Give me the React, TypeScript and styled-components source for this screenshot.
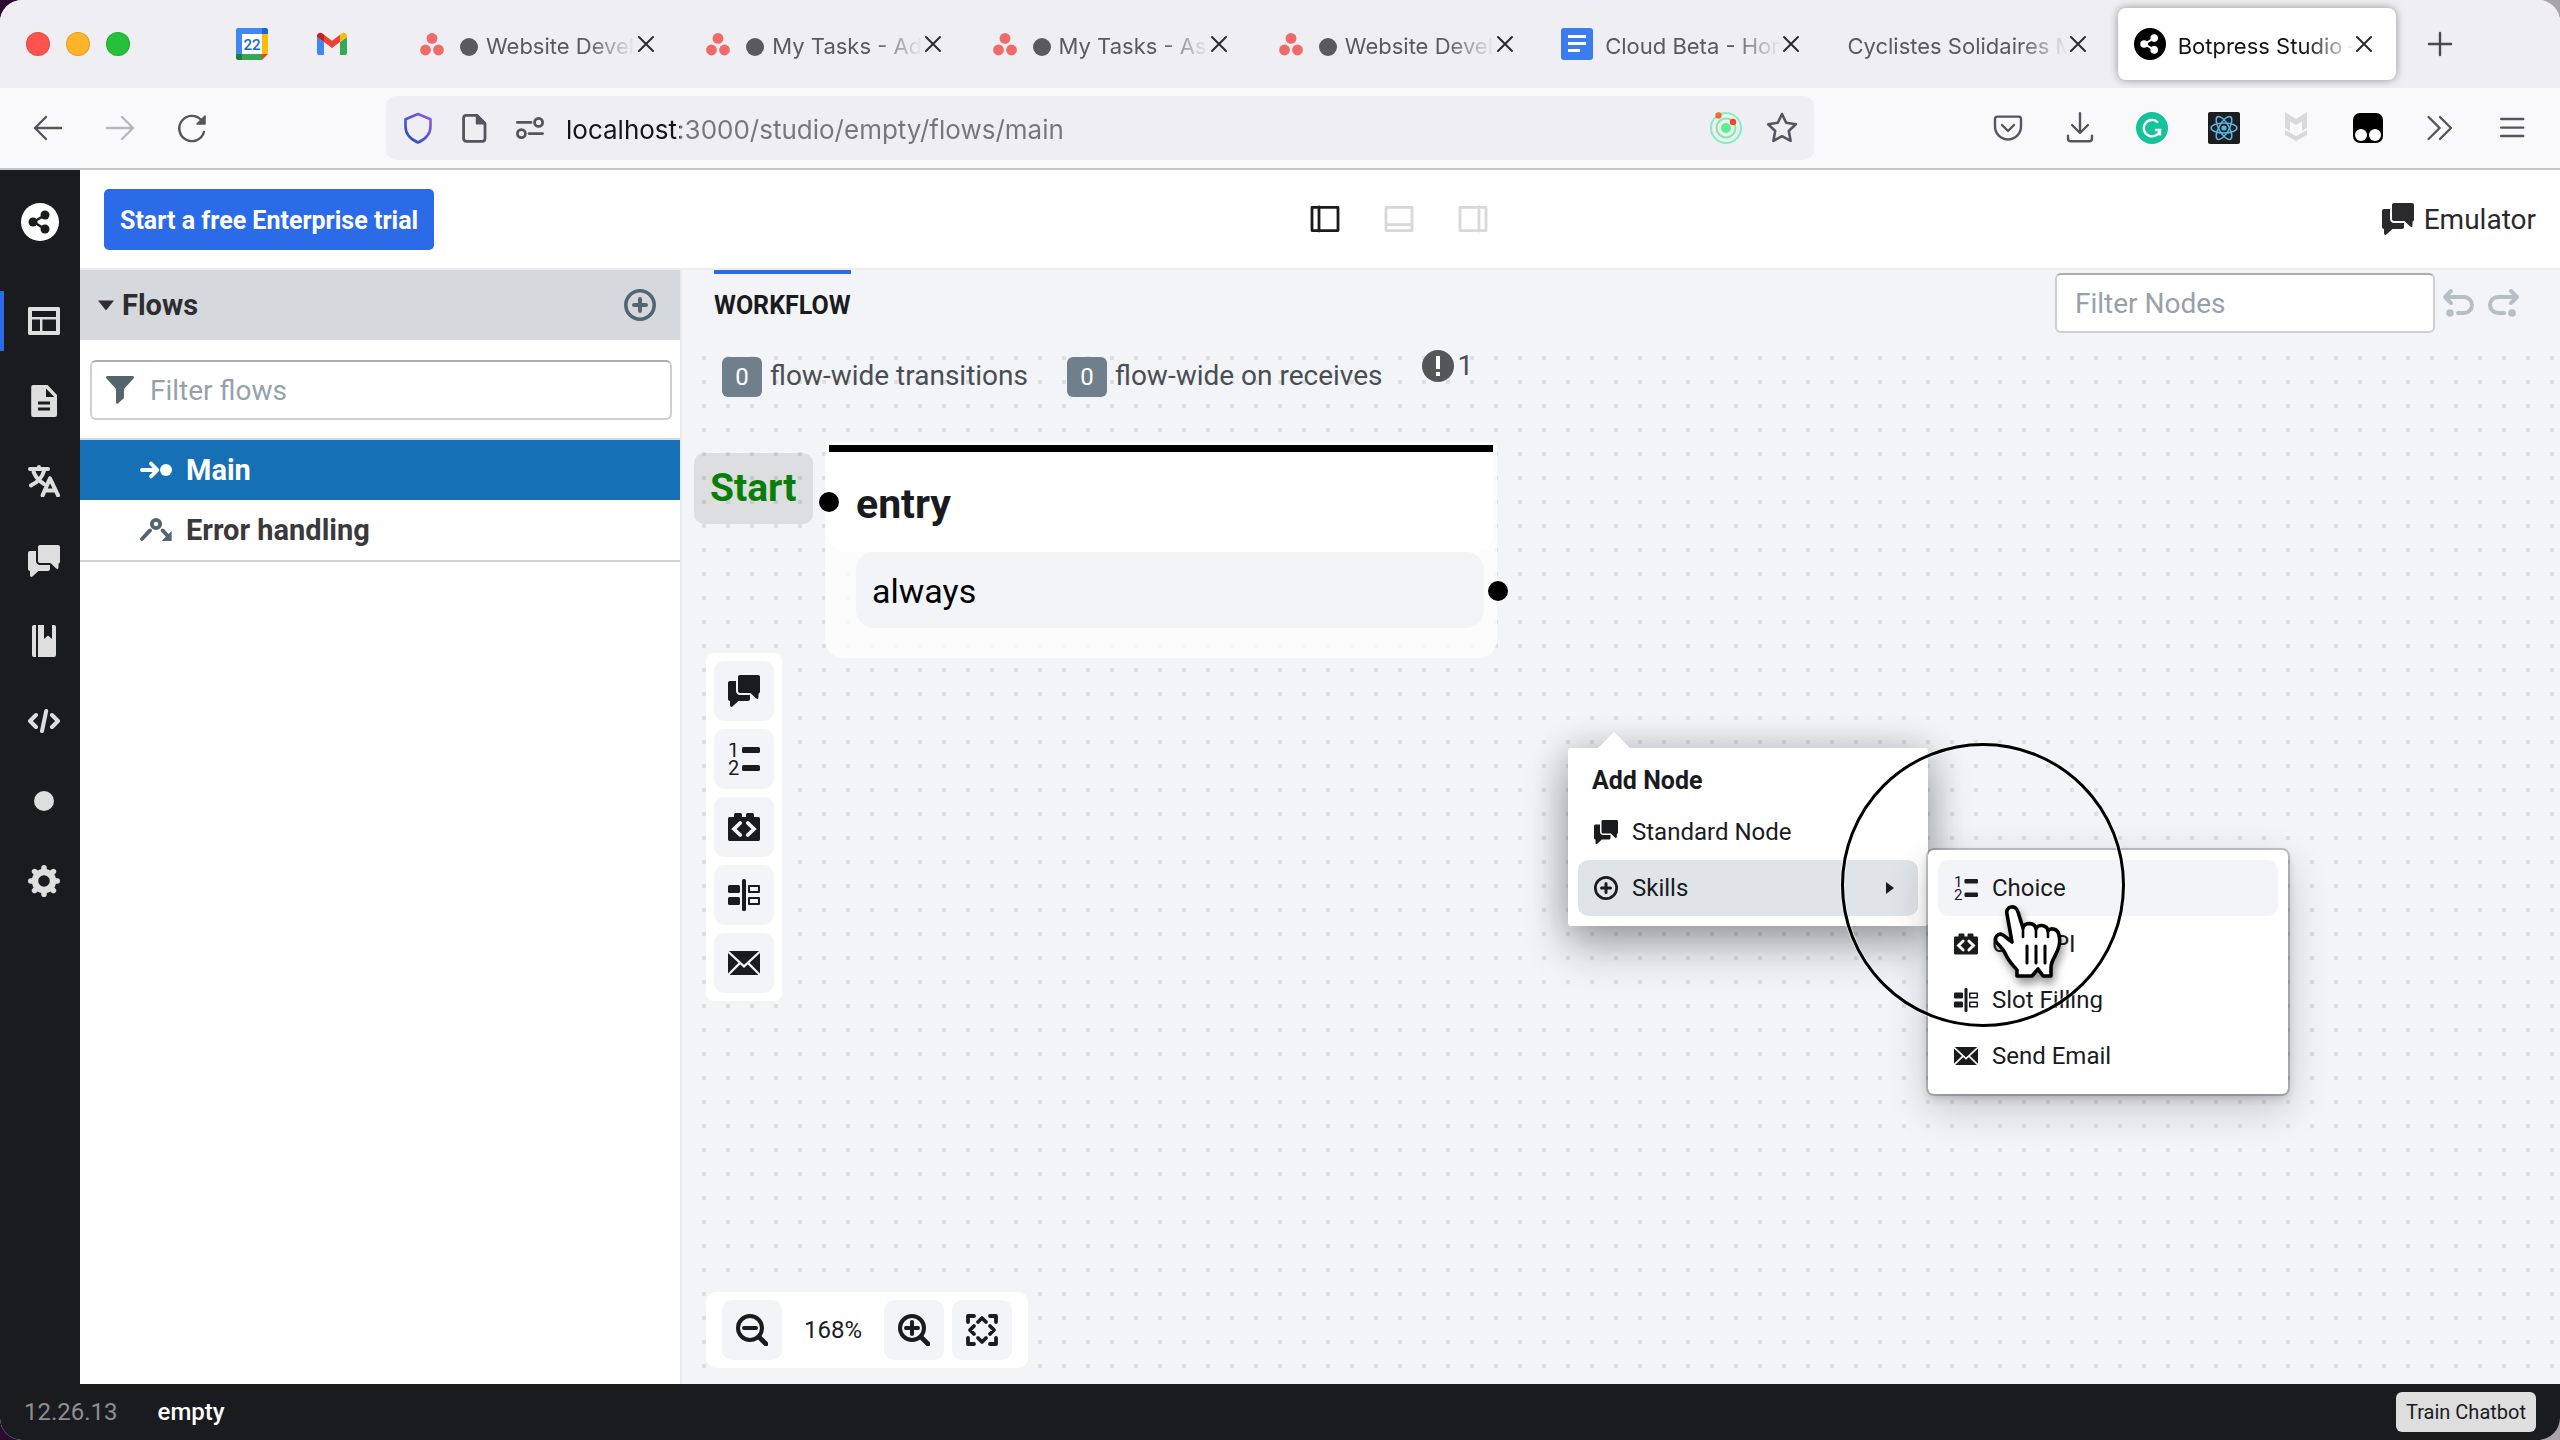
import React from 'react';
import styled, { createGlobalStyle, css } from 'styled-components';

const ui = `Roboto, "Liberation Sans", sans-serif`;
const chrome = `Inter, "Liberation Sans", sans-serif`;
const ink = '#1a1b1f';
const paper = '#f3f4f7';

const GlobalStyle = createGlobalStyle`
  *, *::before, *::after { box-sizing: border-box; }
  body {
    margin: 0;
    background: linear-gradient(90deg, #2b0a33 0 50%, #a7a5a8 50% 100%);
    font-family: ${ui};
    color: ${ink};
  }
  button, input { font-family: inherit; }
  button { border: 0; padding: 0; background: none; color: inherit; cursor: pointer; }
  ul { list-style: none; margin: 0; padding: 0; }
  svg { display: block; flex: none; }
`;

/* ---------- icons ---------- */

const Svg = styled.svg<{ $size?: number }>`
  width: ${p => p.$size ?? 32}px;
  height: ${p => p.$size ?? 32}px;
  fill: currentColor;
`;

const Line = styled(Svg)`
  fill: none;
  stroke: currentColor;
  stroke-width: 1.2;
  stroke-linecap: round;
  stroke-linejoin: round;
`;

type IconProps = { size?: number; cut?: string };

const ChatIcon = ({ size }: IconProps) => (
  <Svg $size={size} viewBox="0 0 16 16" aria-hidden="true">
    <path d="M6 0h9c.55 0 1 .45 1 1v7.4c0 .4-.3.7-.7.9l-.1 2.1c0 .6-.7.8-1.1.4L11.2 9H6c-.55 0-1-.45-1-1V1c0-.55.45-1 1-1z" />
    <path d="M1 3h3v5c0 1.1.9 2 2 2h5v2c0 .55-.45 1-1 1H5.2l-3 2.8c-.5.4-1.2.1-1.2-.5V13c-.55 0-1-.45-1-1V4c0-.55.45-1 1-1z" />
  </Svg>
);

const NumberedIcon = ({ size }: IconProps) => (
  <Svg $size={size} viewBox="0 0 16 16" aria-hidden="true">
    <text x="0" y="7" fontSize="10" fontFamily="Roboto, sans-serif">1</text>
    <text x="0" y="16" fontSize="10" fontFamily="Roboto, sans-serif">2</text>
    <rect x="7" y="2" width="9" height="3" rx=".8" />
    <rect x="7" y="11" width="9" height="3" rx=".8" />
  </Svg>
);

const ApiIcon = ({ size, cut = paper }: IconProps) => (
  <Svg $size={size} viewBox="0 0 16 16" aria-hidden="true">
    <path d="M.8 3H3V1.8c0-.4.4-.8.8-.8h2.4c.4 0 .8.4.8.8V3h2V1.8c0-.4.4-.8.8-.8h2.4c.4 0 .8.4.8.8V3h2.2c.4 0 .8.4.8.8v10.4c0 .4-.4.8-.8.8H.8c-.4 0-.8-.4-.8-.8V3.8c0-.4.4-.8.8-.8z" />
    <path d="M6.1 6 3 9l3.100 3M9.900 6 13 9l-3.100 3" fill="none" stroke={cut} strokeWidth="1.9" strokeLinecap="round" />
  </Svg>
);

const SlotIcon = ({ size }: IconProps) => (
  <Svg $size={size} viewBox="0 0 16 16" aria-hidden="true">
    <rect x="0" y="3" width="6" height="4" rx=".8" />
    <rect x="0" y="9" width="6" height="4" rx=".8" />
    <rect x="7" y="0" width="2" height="16" rx=".8" />
    <path d="M10.5 3.500h5v3h-5zM10.500 9.500h5v3h-5z" fill="none" stroke="currentColor" strokeLinejoin="round" />
  </Svg>
);

const MailIcon = ({ size, cut = paper }: IconProps) => (
  <Svg $size={size} viewBox="0 0 16 16" aria-hidden="true">
    <path d="M0 2h16v12H0z" />
    <path d="M0 2.3 8 9.700l8-7.400M0 14l5.800-5.800M16 14l-5.800-5.800" fill="none" stroke={cut} strokeWidth="1.1" />
  </Svg>
);

const PlusCircleIcon = ({ size }: IconProps) => (
  <Svg $size={size} viewBox="0 0 16 16" aria-hidden="true">
    <circle cx="8" cy="8" r="7.1" fill="none" stroke="currentColor" strokeWidth="1.8" />
    <path d="M8 5v6M5 8h6" stroke="currentColor" strokeWidth="2" strokeLinecap="round" />
  </Svg>
);

const ZoomIcon = ({ plus }: { plus?: boolean }) => (
  <Svg viewBox="0 0 16 16" aria-hidden="true">
    <g fill="none" stroke="currentColor" strokeWidth="2" strokeLinecap="round">
      <circle cx="7" cy="7" r="6" />
      <path d={plus ? 'M4 7h6M7 4v6' : 'M4 7h6'} />
      <path d="m12 12 3 3" strokeWidth="2.4" />
    </g>
  </Svg>
);

const FitIcon = () => (
  <Svg viewBox="0 0 16 16" aria-hidden="true">
    <path
      d="M1 4V1h3M12 1h3v3M15 12v3h-3M4 15H1v-3M6 4l2-2 2 2M12 6l2 2-2 2M10 12l-2 2-2-2M4 10 2 8l2-2"
      fill="none" stroke="currentColor" strokeWidth="1.9" strokeLinecap="round" strokeLinejoin="round"
    />
  </Svg>
);

const ShareMark = ({ size = 38, disc, mark }: { size?: number; disc: string; mark: string }) => (
  <Svg $size={size} viewBox="0 0 38 38" aria-hidden="true">
    <circle cx="19" cy="19" r="19" fill={disc} />
    <path d="M24 12 12.5 19 24 26" fill="none" stroke={mark} strokeWidth="2.4" />
    <g fill={mark}>
      <circle cx="24" cy="12" r="4.5" />
      <circle cx="12" cy="19" r="4.5" />
      <circle cx="24" cy="26" r="4.5" />
    </g>
  </Svg>
);

const AsanaIcon = () => (
  <Svg viewBox="0 0 32 32" aria-hidden="true" color="#f06a6a">
    <circle cx="16" cy="10.4" r="5.4" />
    <circle cx="9.5" cy="22" r="5.4" />
    <circle cx="22.5" cy="22" r="5.4" />
  </Svg>
);

const DocsIcon = () => (
  <Svg viewBox="0 0 32 32" aria-hidden="true">
    <rect width="32" height="32" rx="3" fill="#3b7ded" />
    <path d="M7 8.500h18M7 15.500h18M7 22.500h12" stroke="#fff" strokeWidth="3" />
  </Svg>
);

const CalendarIcon = () => (
  <Svg viewBox="0 0 32 32" aria-hidden="true">
    <path d="M2 0h24v6H6v20H0V2a2 2 0 0 1 2-2z" fill="#4285f4" />
    <path d="M26 0h4a2 2 0 0 1 2 2v4h-6z" fill="#1967d2" />
    <path d="M26 6h6v20h-6z" fill="#fbbc04" />
    <path d="M6 26h20v6H6z" fill="#34a853" />
    <path d="M0 26h6v6H2a2 2 0 0 1-2-2z" fill="#188038" />
    <path d="M26 26h6l-6 6z" fill="#ea4335" />
    <path d="M6 6h20v20H6z" fill="#fff" />
    <text x="16" y="21.5" textAnchor="middle" fontSize="15" fontFamily="Roboto, sans-serif" fontWeight="500" fill="#1a66d0">22</text>
  </Svg>
);

const GmailIcon = () => (
  <Svg viewBox="0 0 32 32" aria-hidden="true">
    <path d="M1 9v16a2 2 0 0 0 2 2h5V14z" fill="#4285f4" />
    <path d="M31 9v16a2 2 0 0 1-2 2h-5V14z" fill="#34a853" />
    <path d="M1 8c0-3 3.500-4 5.500-2.500L8 6.700V14L1 9z" fill="#c5221f" />
    <path d="M31 8c0-3-3.500-4-5.500-2.500L24 6.700V14l7-5z" fill="#fbbc04" />
    <path d="m8 6.700 8 6 8-6V14l-8 6-8-6z" fill="#ea4335" />
  </Svg>
);

/* ---------- browser chrome ---------- */

const Window = styled.div`
  display: flex;
  flex-direction: column;
  height: 100vh;
  border-radius: 22px;
  overflow: hidden;
  background: #fff;
`;

const TabStrip = styled.header`
  display: flex;
  align-items: center;
  height: 88px;
  flex: none;
  background: #efeef3;
  font-family: ${chrome};
`;

const Lights = styled.div`
  display: flex;
  gap: 16px;
  width: 212px;
  padding-left: 26px;
`;

const Light = styled.button<{ $color: string }>`
  width: 24px;
  height: 24px;
  border-radius: 50%;
  background: ${p => p.$color};
  box-shadow: inset 0 0 0 1px rgba(0, 0, 0, 0.12);
`;

const PinnedTab = styled.button`
  display: grid;
  place-items: center;
  width: 80px;
  height: 72px;
`;

const Tabs = styled.div`
  display: flex;
  flex: 1;
  min-width: 0;
  margin-left: 24px;
`;

const Tab = styled.div<{ $active?: boolean }>`
  display: flex;
  align-items: center;
  flex: 1 1 0;
  min-width: 0;
  height: 72px;
  margin: 0 4px;
  padding: 0 22px 0 16px;
  border-radius: 8px;
  color: #5a5a5e;
  ${p => p.$active && css`
    background: #fff;
    color: #15141a;
    box-shadow: 0 0 8px rgba(0, 0, 0, 0.4);
  `}
`;

const TabLabel = styled.button`
  display: flex;
  align-items: center;
  gap: 12px;
  flex: 1;
  min-width: 0;
  height: 100%;
  text-align: left;
`;

const TabTitle = styled.span`
  flex: 1;
  min-width: 0;
  padding-top: 3px;
  overflow: hidden;
  white-space: nowrap;
  font-size: 22px;
  line-height: 32px;
  mask-image: linear-gradient(90deg, #000 calc(100% - 48px), transparent);
`;

const Unread = styled.span`
  display: inline-block;
  width: 18px;
  height: 18px;
  margin-right: 8px;
  border-radius: 50%;
  background: currentColor;
  vertical-align: -2px;
`;

const CloseButton = styled.button`
  color: #2b2a33;
`;

const NewTab = styled.button`
  display: grid;
  place-items: center;
  width: 80px;
  height: 72px;
  margin-right: 80px;
  color: #4a4953;
`;

const NavBar = styled.nav`
  display: flex;
  align-items: center;
  height: 82px;
  flex: none;
  padding: 0 12px;
  background: #f9f9fb;
  border-bottom: 2px solid #c6c5c8;
  color: #55545f;
  font-family: ${chrome};
`;

const ToolButton = styled.button<{ $faded?: boolean }>`
  display: grid;
  place-items: center;
  width: 72px;
  height: 64px;
  opacity: ${p => (p.$faded ? 0.4 : 1)};
`;

const UrlBar = styled.div`
  display: flex;
  align-items: center;
  gap: 20px;
  flex: 1;
  height: 64px;
  margin: 0 158px;
  padding: 0 16px;
  border-radius: 10px;
  background: #efeef3;
`;

const UrlIcons = styled.div`
  display: flex;
  gap: 24px;
`;

const UrlInput = styled.input`
  flex: 1;
  min-width: 0;
  height: 48px;
  padding: 2px 0 0;
  border: 0;
  outline: 0;
  font-size: 26px;
  color: transparent;
  background: linear-gradient(90deg, #15141a 114px, #76757b 114px);
  background-clip: text;
`;

/* ---------- studio shell ---------- */

const Studio = styled.div`
  display: flex;
  flex: 1;
  min-height: 0;
`;

const Rail = styled.nav`
  display: flex;
  flex-direction: column;
  align-items: center;
  width: 80px;
  flex: none;
  padding-top: 33px;
  background: ${ink};
  color: #dedede;
`;

const RailList = styled.ul`
  display: flex;
  flex-direction: column;
  gap: 20px;
  width: 100%;
  margin-top: 50px;
`;

const RailButton = styled.button<{ $active?: boolean }>`
  display: grid;
  place-items: center;
  width: 100%;
  height: 60px;
  padding-left: 4px;
  border-left: 4px solid ${p => (p.$active ? '#2c6be8' : 'transparent')};
`;

const Body = styled.div`
  display: flex;
  flex-direction: column;
  flex: 1;
  min-width: 0;
`;

const TopBar = styled.div`
  display: flex;
  align-items: center;
  justify-content: space-between;
  height: 100px;
  flex: none;
  padding: 0 24px;
  border-bottom: 2px solid #ededee;
`;

const TrialButton = styled.button`
  height: 61px;
  padding: 2px 16px 0;
  border-radius: 5px;
  background: #2c6be8;
  color: #fff;
  font-size: 25px;
  font-weight: 700;
`;

const LayoutToggles = styled.div`
  display: flex;
  gap: 42px;
  padding-right: 18px;
`;

const EmulatorButton = styled.button`
  display: flex;
  align-items: center;
  gap: 10px;
  color: #2a2a2d;
  font-size: 28px;
`;

const Workspace = styled.div`
  display: flex;
  flex: 1;
  min-height: 0;
`;

const FlowPanel = styled.aside`
  width: 602px;
  flex: none;
  border-right: 2px solid #ebebee;
  background: #fff;
`;

const PanelHeader = styled.div`
  display: flex;
  align-items: center;
  justify-content: space-between;
  height: 70px;
  padding: 0 24px 0 18px;
  background: #d5d8dd;
  color: #54656f;
`;

const PanelTitle = styled.button`
  display: flex;
  align-items: center;
  gap: 8px;
  color: #2d2d30;
  font-size: 29px;
  font-weight: 700;
`;

const SearchField = styled.label<{ $inset?: boolean }>`
  display: flex;
  align-items: center;
  gap: 16px;
  height: 60px;
  padding: 0 18px;
  border: 2px solid #cfcfd1;
  border-top-color: #adadb0;
  border-radius: 6px;
  background: #fff;
  color: #54656f;
  ${p => p.$inset && css`
    margin: 20px 8px 18px 10px;
    padding: 0 14px;
  `}

  input {
    flex: 1;
    min-width: 0;
    padding: 0;
    border: 0;
    outline: 0;
    background: none;
    font-size: 28px;
  }
  input::placeholder { color: #96a1ab; opacity: 1; }
`;

const FlowList = styled.ul`
  border-top: 2px solid #d8d8da;
  border-bottom: 2px solid #d5d5d7;
`;

const FlowItem = styled.button<{ $active?: boolean }>`
  display: flex;
  align-items: center;
  gap: 14px;
  width: 100%;
  height: 60px;
  padding-left: 60px;
  font-size: 29px;
  font-weight: 700;
  color: ${p => (p.$active ? '#fff' : '#3a3a3d')};
  background: ${p => (p.$active ? '#1570b5' : '#fff')};

  svg { color: ${p => (p.$active ? '#fff' : '#54656f')}; }
`;

const Editor = styled.main`
  display: flex;
  flex-direction: column;
  flex: 1;
  min-width: 0;
  background: ${paper};
`;

const EditorBar = styled.div`
  display: flex;
  justify-content: space-between;
  height: 66px;
  flex: none;
  padding: 0 40px 0 32px;
`;

const EditorTab = styled.button`
  height: 66px;
  border-top: 4px solid #2c6be8;
  font-size: 25px;
  font-weight: 700;
`;

const EditorTools = styled.div`
  display: flex;
  align-items: center;
  gap: 7px;
  height: 66px;
  color: #b7bec4;

  ${SearchField} { width: 380px; }
`;

const HistoryButtons = styled.div`
  display: flex;
  gap: 14px;
`;

/* ---------- canvas ---------- */

const Canvas = styled.section`
  position: relative;
  flex: 1;
  overflow: hidden;
  background: conic-gradient(from 0deg at 4px 4px, transparent 75%, #dedfe1 0) 20px 20px / 24px 24px;
`;

const Summary = styled.div`
  display: flex;
  align-items: flex-start;
  gap: 39px;
  padding: 21px 0 0 40px;
  color: #4a4e53;
  font-size: 28px;
  line-height: 38px;
`;

const Count = styled.span`
  display: flex;
  gap: 8px;

  b {
    display: grid;
    place-items: center;
    width: 40px;
    height: 40px;
    border-radius: 6px;
    background: #6f7f8c;
    color: #fff;
    font-size: 24px;
    font-weight: 400;
  }
`;

const Issues = styled.span`
  display: flex;
  align-items: center;
  gap: 4px;
  height: 18px;
`;

const Placed = styled.div<{ $x: number; $y: number }>`
  position: absolute;
  left: ${p => p.$x}px;
  top: ${p => p.$y}px;
`;

const StartTag = styled(Placed)`
  padding: 0 16px;
  border-radius: 10px;
  background: rgba(0, 0, 0, 0.09);
  color: #0a7d0a;
  font-size: 39px;
  font-weight: 700;
  line-height: 71px;
`;

const NodeCard = styled(Placed)`
  width: 672px;
  padding: 3px 4px 30px;
  border-radius: 4px 4px 18px 18px;
  background: rgba(255, 255, 255, 0.7);
`;

const NodeHead = styled.div`
  height: 107px;
  padding-left: 27px;
  border-top: 7px solid #000;
  border-radius: 0 0 18px 18px;
  background: #fff;
  font-size: 41px;
  font-weight: 700;
  line-height: 104px;
`;

const NodeRow = styled.div`
  height: 76px;
  margin: 0 9px 0 27px;
  padding-left: 16px;
  border-radius: 18px;
  background: ${paper};
  color: #000;
  font-size: 34px;
  line-height: 78px;
`;

const Port = styled.span<{ $side: 'in' | 'out' }>`
  position: absolute;
  width: 20px;
  height: 20px;
  border-radius: 50%;
  background: #000;
  ${p => (p.$side === 'in' ? 'left: -6px; top: 50px;' : 'right: -11px; top: 139px;')}
`;

const Palette = styled(Placed)`
  display: flex;
  flex-direction: column;
  gap: 8px;
  padding: 8px;
  border-radius: 8px;
  background: #fff;
`;

const SquareButton = styled.button`
  display: grid;
  place-items: center;
  width: 60px;
  height: 60px;
  border-radius: 10px;
  background: ${paper};
`;

const ZoomBar = styled.div`
  position: absolute;
  left: 24px;
  bottom: 16px;
  display: flex;
  align-items: center;
  gap: 8px;
  padding: 8px 16px;
  border-radius: 10px;
  background: #fff;
`;

const ZoomValue = styled.span`
  width: 86px;
  text-align: center;
  font-size: 24px;
`;

const Menu = styled(Placed)<{ $outlined?: boolean }>`
  width: 360px;
  padding: 10px;
  border-radius: ${p => (p.$outlined ? 6 : 3)}px;
  background: #fff;
  box-shadow: ${p => p.$outlined
    ? '0 0 0 2px rgba(16, 22, 26, 0.2), 0 4px 8px rgba(16, 22, 26, 0.2), 0 14px 40px rgba(16, 22, 26, 0.2)'
    : '0 0 36px rgba(16, 22, 26, 0.2), 0 20px 44px rgba(16, 22, 26, 0.32)'};
`;

const MenuArrow = styled.span`
  position: absolute;
  left: 29px;
  top: -16px;
  width: 34px;
  height: 17px;
  background: #fff;
  clip-path: polygon(50% 0, 100% 100%, 0 100%);
`;

const MenuTitle = styled.h2`
  margin: 0;
  padding-left: 14px;
  font-size: 25px;
  font-weight: 700;
  line-height: 46px;
`;

const MenuItem = styled.button<{ $bg?: string }>`
  display: flex;
  align-items: center;
  gap: 14px;
  width: 100%;
  height: 56px;
  padding: 0 24px 0 16px;
  border-radius: 10px;
  background: ${p => p.$bg ?? 'transparent'};
  font-size: 24px;
  text-align: left;

  span {
    flex: 1;
    overflow: hidden;
    line-height: 24px;
  }
`;

const ClickRing = styled(Placed)`
  width: 284px;
  height: 284px;
  border: 3px solid #000;
  border-radius: 50%;
  box-shadow: 0 0 0 1px rgba(255, 255, 255, 0.5), inset 0 0 0 1px rgba(255, 255, 255, 0.5);
  pointer-events: none;
`;

const Pointer = styled(Placed)`
  pointer-events: none;
  filter: drop-shadow(2px 6px 4px rgba(0, 0, 0, 0.4));

  svg { width: 70px; height: 74px; }
`;

/* ---------- status bar ---------- */

const StatusBar = styled.footer`
  display: flex;
  align-items: center;
  gap: 40px;
  height: 56px;
  flex: none;
  padding: 0 24px;
  background: ${ink};
  color: #fff;
  font-size: 24px;
  font-weight: 500;
`;

const Version = styled.span`
  color: #8d8e91;
  font-weight: 400;
`;

const TrainButton = styled.button`
  height: 40px;
  margin-left: auto;
  padding: 0 10px;
  border-radius: 6px;
  background: #dedede;
  color: ${ink};
  font-size: 20px;
`;

/* ---------- data ---------- */

const tabs = [
  { title: 'Website Development', icon: <AsanaIcon />, unread: true },
  { title: 'My Tasks - Adrien', icon: <AsanaIcon />, unread: true },
  { title: 'My Tasks - Asana', icon: <AsanaIcon />, unread: true },
  { title: 'Website Development', icon: <AsanaIcon />, unread: true },
  { title: 'Cloud Beta - Home', icon: <DocsIcon /> },
  { title: 'Cyclistes Solidaires Montréal' },
  { title: 'Botpress Studio – main', icon: <ShareMark size={32} disc="#000" mark="#fff" />, active: true },
];

const railItems = [
  {
    label: 'Flows',
    icon: (
      <Svg viewBox="0 0 16 16"><path fillRule="evenodd" d="M.7 1h14.600c.4 0 .7.3.7.7v12.600c0 .4-.3.7-.7.7H.7a.7.7 0 0 1-.7-.7V1.700C0 1.300.3 1 .7 1zM2 3v3h12V3zm0 4.200V13h4V7.200zm5.200 0V13H14V7.200z" /></Svg>
    ),
  },
  {
    label: 'Content',
    icon: (
      <Svg viewBox="0 0 16 16"><path fillRule="evenodd" d="M2.600 0h7.200L14.500 5v10c0 .6-.4 1-1 1H2.600c-.6 0-1-.4-1-1V1c0-.6.4-1 1-1zM9 1.700V6h4.200zM5 8.300v1.500h6V8.300zm0 3v1.500h6v-1.500z" /></Svg>
    ),
  },
  {
    label: 'Translations',
    icon: (
      <Line viewBox="0 0 16 16"><path strokeWidth="2" d="M1 2h9M5.500 1v1M8 3C7 6.500 4.500 8.800 1.500 10.200M2.800 3.500C4 6.500 5.500 8 8 9.500" /><path strokeWidth="2" d="m7.300 15.200 3.700-8.500 4 8.500M9 12.700h4.200" /></Line>
    ),
  },
  { label: 'Messages', icon: <ChatIcon /> },
  {
    label: 'Library',
    icon: (
      <Svg viewBox="0 0 16 16"><path d="M3 0h1v16H3c-.6 0-1-.4-1-1V1c0-.6.4-1 1-1zM5 0h3v7l2-1.800L12 7V0h1c.6 0 1 .4 1 1v14c0 .6-.4 1-1 1H5z" /></Svg>
    ),
  },
  {
    label: 'Code',
    icon: (
      <Line viewBox="0 0 16 16"><path strokeWidth="2" d="M4 5 1 8l3 3M12 5l3 3-3 3M9.100 3 7 13" /></Line>
    ),
  },
  { label: 'Status', icon: <Svg viewBox="0 0 16 16"><circle cx="8" cy="8" r="5" /></Svg> },
  {
    label: 'Settings',
    icon: (
      <Svg viewBox="0 0 16 16">
        <circle cx="8" cy="8" r="4.5" fill="none" stroke="currentColor" strokeWidth="3.2" />
        <path d="M8 1.400v1.700M8 12.900v1.700M1.400 8h1.700M12.900 8h1.700M3.300 3.300l1.100 1.100M11.600 11.600l1.100 1.100M3.300 12.700l1.100-1.100M11.600 4.400l1.100-1.100" stroke="currentColor" strokeWidth="2.8" strokeLinecap="round" />
      </Svg>
    ),
  },
];

const skills = [
  { label: 'Choice', Icon: NumberedIcon },
  { label: 'Call API', Icon: ApiIcon },
  { label: 'Slot Filling', Icon: SlotIcon },
  { label: 'Send Email', Icon: MailIcon },
];

const extensions = [
  { label: 'Save to Pocket', icon: <Line viewBox="0 0 16 16"><path d="M2.700 2.300h10.600c.7 0 1.200.5 1.200 1.200v3.700a6.500 6.500 0 0 1-13 0V3.500c0-.7.5-1.200 1.200-1.200z" /><path d="m5 6.500 3 3 3-3" /></Line> },
  { label: 'Downloads', icon: <Line viewBox="0 0 16 16"><path d="M8 .6v9.600M4 6.500l4 4 4-4M2 11.800v1.400c0 .8.600 1.400 1.400 1.400h9.200c.8 0 1.400-.6 1.400-1.400v-1.400" /></Line> },
  { label: 'Grammarly', icon: <Svg viewBox="0 0 32 32"><circle cx="16" cy="16" r="16" fill="#15c39a" /><path d="M22 10.500A8.200 8.200 0 1 0 24 18h-5M24 17v6.500" fill="none" stroke="#fff" strokeWidth="2.4" /></Svg> },
  {
    label: 'React Developer Tools',
    icon: (
      <Svg viewBox="0 0 32 32">
        <rect width="32" height="32" rx="2" fill="#1d1d20" />
        <circle cx="16" cy="16" r="2.6" fill="#5ab8e6" />
        <g fill="none" stroke="#5ab8e6" strokeWidth="1.5">
          <ellipse cx="16" cy="16" rx="13" ry="5" />
          <ellipse cx="16" cy="16" rx="13" ry="5" transform="rotate(60 16 16)" />
          <ellipse cx="16" cy="16" rx="13" ry="5" transform="rotate(120 16 16)" />
        </g>
      </Svg>
    ),
  },
  { label: 'McAfee', icon: <Svg viewBox="0 0 32 32" color="#d9d9dc"><path d="m5 0 11 7 11-7v16l-5 3V9.500L16 13l-6-3.500V19l-5-3z" /><path d="m5 18 11 6 11-6v5l-11 6-11-6z" /></Svg> },
  { label: 'Tampermonkey', icon: <Svg viewBox="0 0 32 32"><rect x="1" y="1" width="30" height="30" rx="7" fill="#000" /><circle cx="9" cy="23" r="6" fill="#fff" /><circle cx="23" cy="23" r="6" fill="#fff" /></Svg> },
  { label: 'More tools', icon: <Line viewBox="0 0 16 16"><path d="m2.300 2.500 5.500 5.500-5.500 5.500M8 2.500 13.500 8 8 13.500" /></Line> },
  { label: 'Menu', icon: <Line viewBox="0 0 16 16"><path d="M2.600 3.500h11M2.600 7.800h11M2.600 12h11" /></Line> },
];

const panes = [
  { label: 'Toggle side panel', on: true, d: 'M5 2v12' },
  { label: 'Toggle bottom panel', on: false, d: 'M1.500 10.800h13' },
  { label: 'Toggle inspector', on: false, d: 'M11 2v12' },
];

export default function App() {
  return (
    <>
      <GlobalStyle />
      <Window>
        <TabStrip>
          <Lights>
            <Light $color="#ff544d" aria-label="Close window" />
            <Light $color="#ffb429" aria-label="Minimise window" />
            <Light $color="#25c138" aria-label="Zoom window" />
          </Lights>
          <PinnedTab aria-label="Google Calendar"><CalendarIcon /></PinnedTab>
          <PinnedTab aria-label="Gmail"><GmailIcon /></PinnedTab>
          <Tabs>
            {tabs.map((tab, i) => (
              <Tab key={i} $active={tab.active}>
                <TabLabel>
                  {tab.icon}
                  <TabTitle>{tab.unread && <Unread />}{tab.title}</TabTitle>
                </TabLabel>
                <CloseButton aria-label="Close tab">
                  <Line $size={20} viewBox="0 0 20 20"><path strokeWidth="2" d="m3 3 14 14M17 3 3 17" /></Line>
                </CloseButton>
              </Tab>
            ))}
          </Tabs>
          <NewTab aria-label="New tab">
            <Line $size={26} viewBox="0 0 26 26"><path strokeWidth="2.4" d="M13 2v22M2 13h22" /></Line>
          </NewTab>
        </TabStrip>

        <NavBar>
          <ToolButton aria-label="Back"><Line viewBox="0 0 16 16"><path d="M14.500 8h-13M7 2.500 1.500 8 7 13.500" /></Line></ToolButton>
          <ToolButton aria-label="Forward" $faded><Line viewBox="0 0 16 16"><path d="M1.500 8h13M9 2.500 14.500 8 9 13.500" /></Line></ToolButton>
          <ToolButton aria-label="Reload">
            <Line viewBox="0 0 16 16"><path d="M14 10A6.300 6.300 0 1 1 12.600 4" /><path d="M14.500 2v4h-4z" fill="currentColor" strokeWidth=".8" /></Line>
          </ToolButton>
          <UrlBar>
            <UrlIcons>
              <Line viewBox="0 0 32 32">
                <defs><linearGradient id="shield" x1="1" y1="0" x2="0" y2="1"><stop stopColor="#9059e8" /><stop offset="1" stopColor="#1f4fc0" /></linearGradient></defs>
                <path stroke="url(#shield)" strokeWidth="2.6" d="m16 2 12.500 5.200v7.300c0 7-4.500 12.500-12.500 16-8-3.500-12.500-9-12.500-16V7.200z" />
              </Line>
              <Line viewBox="0 0 16 16"><path strokeWidth="1.4" d="M4.200 1.700H9.500l4 4v7.600c0 .8-.6 1.400-1.400 1.400H4.200c-.8 0-1.400-.6-1.400-1.400V3.100c0-.8.6-1.400 1.400-1.400z" /><path d="M9.500 1.700v4h4z" fill="currentColor" /></Line>
              <Line viewBox="0 0 16 16"><path strokeWidth="1.4" d="M1.700 5.200h6.800M7.500 10.800h6.800" /><circle cx="12.3" cy="5.2" r="2" strokeWidth="1.4" /><circle cx="3.7" cy="10.8" r="2" strokeWidth="1.4" /></Line>
            </UrlIcons>
            <UrlInput aria-label="Address" defaultValue="localhost:3000/studio/empty/flows/main" />
            <UrlIcons>
              <Svg viewBox="0 0 32 32">
                <g fill="none" stroke="#7dee9e" strokeWidth="2"><circle cx="16" cy="16" r="15" stroke="#80f0c0" /><circle cx="16" cy="16" r="9.5" /></g>
                <circle cx="16" cy="16" r="5" fill="#5cf08c" />
                <circle cx="8.5" cy="3.5" r="3.2" fill="#ee6b35" /><circle cx="23" cy="10" r="3.2" fill="#e8482c" />
              </Svg>
              <Line viewBox="0 0 16 16"><path strokeWidth="1.3" d="m8 1 2.100 4.400 4.800.700-3.500 3.400.9 4.900L8 12.100l-4.300 2.300.9-4.900L1.100 6.100l4.800-.700z" /></Line>
            </UrlIcons>
          </UrlBar>
          {extensions.map(e => <ToolButton key={e.label} aria-label={e.label}>{e.icon}</ToolButton>)}
        </NavBar>

        <Studio>
          <Rail>
            <ShareMark disc="#fff" mark={ink} />
            <RailList>
              {railItems.map((r, i) => (
                <li key={r.label}><RailButton $active={i === 0} aria-label={r.label}>{r.icon}</RailButton></li>
              ))}
            </RailList>
          </Rail>

          <Body>
            <TopBar>
              <TrialButton>Start a free Enterprise trial</TrialButton>
              <LayoutToggles>
                {panes.map(p => (
                  <button key={p.label} aria-label={p.label}>
                    <Line viewBox="0 0 16 16" color={p.on ? ink : '#d8d8da'}>
                      <path strokeWidth="1.4" d={`M1.500 2.200h13v11.600h-13z${p.d}`} />
                    </Line>
                  </button>
                ))}
              </LayoutToggles>
              <EmulatorButton><ChatIcon />Emulator</EmulatorButton>
            </TopBar>

            <Workspace>
              <FlowPanel>
                <PanelHeader>
                  <PanelTitle>
                    <Svg $size={16} viewBox="0 0 16 16"><path d="M0 3.500h16L8 13.500z" /></Svg>
                    Flows
                  </PanelTitle>
                  <button aria-label="Add flow"><PlusCircleIcon /></button>
                </PanelHeader>
                <SearchField $inset>
                  <Svg $size={28} viewBox="0 0 28 28"><path d="M1.500 0h25c1.300 0 2 1.500 1 2.500L18 13v9l-6 5.500c-.8.7-2 .2-2-.9V13L.5 2.500C-.5 1.500.2 0 1.500 0z" /></Svg>
                  <input aria-label="Filter flows" placeholder="Filter flows" />
                </SearchField>
                <FlowList>
                  <li>
                    <FlowItem $active>
                      <Svg viewBox="0 0 16 16"><path d="M1 8h7M5.500 4.800 8.700 8l-3.200 3.200" fill="none" stroke="currentColor" strokeWidth="1.9" strokeLinecap="round" strokeLinejoin="round" /><circle cx="13" cy="8" r="3" /></Svg>
                      Main
                    </FlowItem>
                  </li>
                  <li>
                    <FlowItem>
                      <Svg viewBox="0 0 16 16"><g fill="none" stroke="currentColor" strokeWidth="1.9" strokeLinecap="round"><path d="m1 12.500 4-4.300M11.300 8.200l3 3.300" /><circle cx="8" cy="5" r="2.1" /></g><path d="M15.800 8.500v5h-5z" /></Svg>
                      Error handling
                    </FlowItem>
                  </li>
                </FlowList>
              </FlowPanel>

              <Editor>
                <EditorBar>
                  <EditorTab>WORKFLOW</EditorTab>
                  <EditorTools>
                    <SearchField><input aria-label="Filter Nodes" placeholder="Filter Nodes" /></SearchField>
                    <HistoryButtons>
                      <button aria-label="Undo">
                        <Svg viewBox="0 0 16 16"><path d="M2 5h9a4 4 0 0 1 0 8H8M4.500 2 1.500 5l3 3" fill="none" stroke="currentColor" strokeWidth="2" strokeLinecap="round" strokeLinejoin="round" /><circle cx="4" cy="13" r="1.9" /></Svg>
                      </button>
                      <button aria-label="Redo">
                        <Svg viewBox="0 0 16 16"><path d="M14 5H5a4 4 0 0 0 0 8h3M11.500 2l3 3-3 3" fill="none" stroke="currentColor" strokeWidth="2" strokeLinecap="round" strokeLinejoin="round" /><circle cx="12" cy="13" r="1.9" /></Svg>
                      </button>
                    </HistoryButtons>
                  </EditorTools>
                </EditorBar>

                <Canvas>
                  <Summary>
                    <Count><b>0</b>flow-wide transitions</Count>
                    <Count><b>0</b>flow-wide on receives</Count>
                    <Issues>
                      <Svg viewBox="0 0 32 32"><circle cx="16" cy="16" r="16" fill="#55565a" /><path d="M14 6h4v13h-4zM14 22h4v4h-4z" fill="#fff" /></Svg>
                      1
                    </Issues>
                  </Summary>

                  <StartTag $x={12} $y={117}>Start</StartTag>
                  <NodeCard $x={143} $y={106}>
                    <NodeHead>entry</NodeHead>
                    <NodeRow>always</NodeRow>
                    <Port $side="in" />
                    <Port $side="out" />
                  </NodeCard>

                  <Palette $x={24} $y={317}>
                    <SquareButton aria-label="Standard Node"><ChatIcon /></SquareButton>
                    {skills.map(({ label, Icon }) => (
                      <SquareButton key={label} aria-label={label}><Icon /></SquareButton>
                    ))}
                  </Palette>

                  <ZoomBar>
                    <SquareButton aria-label="Zoom out"><ZoomIcon /></SquareButton>
                    <ZoomValue>168%</ZoomValue>
                    <SquareButton aria-label="Zoom in"><ZoomIcon plus /></SquareButton>
                    <SquareButton aria-label="Fit to screen"><FitIcon /></SquareButton>
                  </ZoomBar>

                  <Menu $x={886} $y={412}>
                    <MenuArrow />
                    <MenuTitle>Add Node</MenuTitle>
                    <MenuItem><ChatIcon size={24} /><span>Standard Node</span></MenuItem>
                    <MenuItem $bg="#dfe4e8">
                      <PlusCircleIcon size={24} />
                      <span>Skills</span>
                      <Svg $size={12} viewBox="0 0 12 12"><path d="M4 0v12l8-6z" /></Svg>
                    </MenuItem>
                  </Menu>
                  <Menu $x={1246} $y={514} $outlined>
                    {skills.map(({ label, Icon }, i) => (
                      <MenuItem key={label} $bg={i === 0 ? paper : undefined}>
                        <Icon size={24} cut="#fff" /><span>{label}</span>
                      </MenuItem>
                    ))}
                  </Menu>

                  <ClickRing $x={1159} $y={407} />
                  <Pointer $x={1311} $y={569}>
                    <svg viewBox="0 0 70 74" aria-hidden="true">
                      <path d="M24 71v-6c-4-5-8-8-11-15-2-5-5-8-9-12-4-5 1-11 6-8 3 2 6 5 9 7L14 9c-2-8 9-10 11-2l5 16c1-6 12-6 13 1 1-5 11-5 12 2 3-4 10-2 11 4 2 9-1 15-4 21-3 5-4 8-4 12v8h-8l-5-7-6 7z" fill="#fff" stroke="#000" strokeWidth="3.6" strokeLinejoin="round" />
                      <path d="M30 22v10M43 23v9M55 25v7" stroke="#000" strokeWidth="2.6" strokeLinecap="round" />
                      <path d="M34 41v17M43 41v17M52 41v17" stroke="#000" strokeWidth="3" strokeLinecap="round" />
                    </svg>
                  </Pointer>
                </Canvas>
              </Editor>
            </Workspace>
          </Body>
        </Studio>

        <StatusBar>
          <Version>12.26.13</Version>
          <span>empty</span>
          <TrainButton>Train Chatbot</TrainButton>
        </StatusBar>
      </Window>
    </>
  );
}
